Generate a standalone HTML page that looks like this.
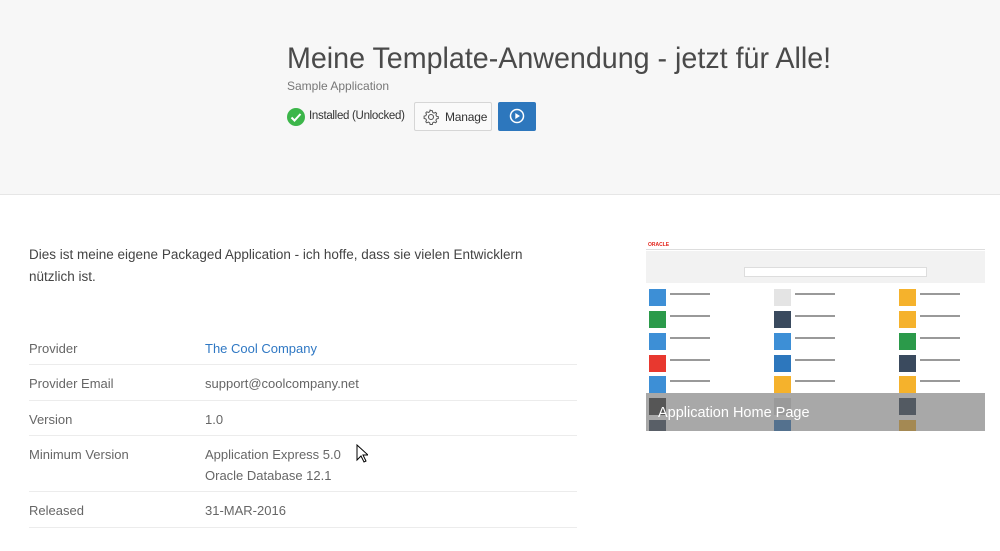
<!DOCTYPE html>
<html><head><meta charset="utf-8"><style>
*{margin:0;padding:0;box-sizing:border-box}
body{width:1000px;height:551px;overflow:hidden;background:#fff;font-family:"Liberation Sans",sans-serif;position:relative;color:#555}
.hdr{position:absolute;left:0;top:0;width:1000px;height:195px;background:#f7f7f7;border-bottom:1px solid #e6e6e6}
.t{position:absolute;left:287px;top:42px;font-size:30px;color:#4a4a4a;white-space:nowrap;transform:scaleX(0.955);transform-origin:left}
.sub{position:absolute;left:287px;top:79px;font-size:12px;color:#777}
.ok{position:absolute;left:287px;top:108px;width:18px;height:18px;border-radius:50%;background:#3cb64a}
.okt{position:absolute;left:309px;top:110px;font-size:11.5px;color:#333;letter-spacing:-0.3px}
.mg{position:absolute;left:414px;top:102px;width:78px;height:29px;border:1px solid #d6d6d6;background:#fafafa;border-radius:2px;font-size:12px;color:#333;padding:7px 0 0 30px;letter-spacing:-0.2px}
.pl{position:absolute;left:498px;top:102px;width:38px;height:29px;background:#2d77bd;border-radius:2px}
.desc{position:absolute;left:29px;top:244px;font-size:13.5px;line-height:22px;color:#444;width:520px}
.row{position:absolute;left:29px;width:548px;border-bottom:1px solid #ececec;font-size:13px;color:#666}
.row span{position:absolute;left:176px}
.ss{position:absolute;left:646px;top:240px;width:339px;height:191px;background:#fff;overflow:hidden}
.ic{position:absolute;width:17px;height:17px}
.lb{position:absolute;height:2px;background:#999;width:40px}
.ov{position:absolute;left:0;top:153px;width:339px;height:38px;background:rgba(110,110,110,.6);color:#fff;font-size:14.5px;padding:12px 0 0 12px}
</style></head><body>
<div class="hdr"></div>
<div class="t">Meine Template-Anwendung - jetzt für Alle!</div>
<div class="sub">Sample Application</div>
<div class="ok"><svg width="18" height="18"><path d="M4.5 9.5l3 3 6-6.5" stroke="#fff" stroke-width="2" fill="none"/></svg></div>
<div class="okt">Installed (Unlocked)</div>
<div class="mg"><svg style="position:absolute;left:8px;top:6px" width="16" height="16" viewBox="0 0 16 16"><circle cx="8" cy="8" r="2.5" fill="none" stroke="#555" stroke-width="1.1"/><path d="M8 1.5l1.3.2.4 1.7 1.3.7 1.6-.7 1 1-.7 1.6.7 1.3 1.7.4v1.8l-1.7.4-.7 1.3.7 1.6-1 1-1.6-.7-1.3.7-.4 1.7H7.1l-.4-1.7-1.3-.7-1.6.7-1-1 .7-1.6-.7-1.300-1.7-.4V7.1l1.7-.4.7-1.3-.7-1.6 1-1 1.6.7 1.3-.7.4-1.7z" fill="none" stroke="#555" stroke-width="1"/></svg>Manage</div>
<div class="pl"><svg style="position:absolute;left:11px;top:6px" width="16" height="16"><circle cx="8" cy="8" r="6.5" fill="none" stroke="#fff" stroke-width="1.5"/><path d="M6.3 5v6l4.7-3z" fill="#fff"/></svg></div>
<div class="desc">Dies ist meine eigene Packaged Application - ich hoffe, dass sie vielen Entwicklern nützlich ist.</div>
<div class="row" style="top:341px;height:24px">Provider<span style="color:#2f78c4">The Cool Company</span></div>
<div class="row" style="top:376px;height:25px">Provider Email<span>support@coolcompany.net</span></div>
<div class="row" style="top:412px;height:24px">Version<span>1.0</span></div>
<div class="row" style="top:447px;height:45px">Minimum Version<span style="line-height:21px;top:-3px">Application Express 5.0<br>Oracle Database 12.1</span></div>
<div class="row" style="top:503px;height:25px">Released<span>31-MAR-2016</span></div>
<svg style="position:absolute;left:356px;top:444px" width="12" height="20"><path d="M1 1v15l4-4 3 6 2-1-3-6h5z" fill="#fff" stroke="#000"/></svg>
<div class="ss">
<div style="position:absolute;left:0;top:0;width:339px;height:10px;border-bottom:1px solid #ddd;background:#fff"></div>
<div style="position:absolute;left:2px;top:2px;font-size:5px;color:#e2231a;font-weight:bold">ORACLE</div>
<div style="position:absolute;left:0;top:11px;width:339px;height:32px;background:#f2f2f2"></div>
<div style="position:absolute;left:98px;top:27px;width:183px;height:10px;background:#fff;border:1px solid #ddd"></div>
<div class="ic" style="left:3px;top:49px;background:#3d8fd6"></div><div class="ic" style="left:128px;top:49px;background:#e4e4e4"></div><div class="ic" style="left:253px;top:49px;background:#f5b22c"></div>
<div class="ic" style="left:3px;top:71px;background:#2b9a4a"></div><div class="ic" style="left:128px;top:71px;background:#3a4a5e"></div><div class="ic" style="left:253px;top:71px;background:#f5b22c"></div>
<div class="ic" style="left:3px;top:93px;background:#3d8fd6"></div><div class="ic" style="left:128px;top:93px;background:#3d8fd6"></div><div class="ic" style="left:253px;top:93px;background:#2b9a4a"></div>
<div class="ic" style="left:3px;top:115px;background:#e8382f"></div><div class="ic" style="left:128px;top:115px;background:#2d77bd"></div><div class="ic" style="left:253px;top:115px;background:#3a4a5e"></div>
<div class="ic" style="left:3px;top:136px;background:#3d8fd6"></div><div class="ic" style="left:128px;top:136px;background:#f5b22c"></div><div class="ic" style="left:253px;top:136px;background:#f5b22c"></div>
<div class="ic" style="left:3px;top:158px;background:#333"></div><div class="ic" style="left:128px;top:158px;background:#ddd"></div><div class="ic" style="left:253px;top:158px;background:#2c3e50"></div>
<div class="ic" style="left:3px;top:180px;background:#3a4a5e"></div><div class="ic" style="left:128px;top:180px;background:#2d77bd"></div><div class="ic" style="left:253px;top:180px;background:#f5b22c"></div>
<div class="lb" style="left:24px;top:53px"></div><div class="lb" style="left:149px;top:53px"></div><div class="lb" style="left:274px;top:53px"></div>
<div class="lb" style="left:24px;top:75px"></div><div class="lb" style="left:149px;top:75px"></div><div class="lb" style="left:274px;top:75px"></div>
<div class="lb" style="left:24px;top:97px"></div><div class="lb" style="left:149px;top:97px"></div><div class="lb" style="left:274px;top:97px"></div>
<div class="lb" style="left:24px;top:119px"></div><div class="lb" style="left:149px;top:119px"></div><div class="lb" style="left:274px;top:119px"></div>
<div class="lb" style="left:24px;top:140px"></div><div class="lb" style="left:149px;top:140px"></div><div class="lb" style="left:274px;top:140px"></div>
<div class="ov">Application Home Page</div>
</div>
</body></html>
